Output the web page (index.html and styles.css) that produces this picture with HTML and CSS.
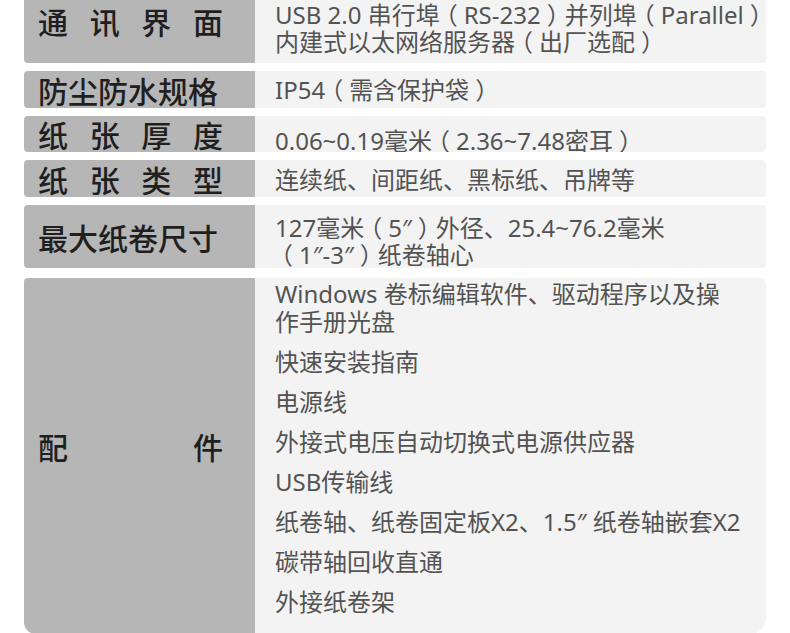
FILE: index.html
```html
<!DOCTYPE html>
<html lang="zh-CN">
<head>
<meta charset="utf-8">
<title>规格</title>
<link rel="stylesheet" href="styles.css">
</head>
<body>
<div class="spec">
  <div class="row r-comm">
    <div class="label label-top spread"><span>通</span><span>讯</span><span>界</span><span>面</span></div>
    <div class="value">
      <div class="line">USB 2.0 串行埠<span class="pp">（</span>RS-232<span class="pp">）</span>并列埠<span class="pp">（</span>Parallel<span class="pp">）</span></div>
      <div class="line">内建式以太网络服务器<span class="pp">（</span>出厂选配<span class="pp">）</span></div>
    </div>
  </div>
  <div class="row r-ip">
    <div class="label">防尘防水规格</div>
    <div class="value"><div class="line">IP54<span class="pp">（</span>需含保护袋<span class="pp">）</span></div></div>
  </div>
  <div class="row r-thick">
    <div class="label spread"><span>纸</span><span>张</span><span>厚</span><span>度</span></div>
    <div class="value"><div class="line">0.06~0.19毫米<span class="pp">（</span>2.36~7.48密耳<span class="pp">）</span></div></div>
  </div>
  <div class="row r-type">
    <div class="label spread"><span>纸</span><span>张</span><span>类</span><span>型</span></div>
    <div class="value"><div class="line">连续纸、间距纸、黑标纸、吊牌等</div></div>
  </div>
  <div class="row r-roll">
    <div class="label">最大纸卷尺寸</div>
    <div class="value">
      <div class="line">127毫米<span class="pp">（</span>5″<span class="pp">）</span>外径、25.4~76.2毫米</div>
      <div class="line"><span class="pp">（</span>1″-3″<span class="pp">）</span>纸卷轴心</div>
    </div>
  </div>
  <div class="row r-acc">
    <div class="label spread"><span>配</span><span>件</span></div>
    <div class="value list">
      <div class="item first">Windows 卷标编辑软件、驱动程序以及操<br>作手册光盘</div>
      <div class="item">快速安装指南</div>
      <div class="item">电源线</div>
      <div class="item">外接式电压自动切换式电源供应器</div>
      <div class="item">USB传输线</div>
      <div class="item">纸卷轴、纸卷固定板X2、1.5″ 纸卷轴嵌套X2</div>
      <div class="item">碳带轴回收直通</div>
      <div class="item">外接纸卷架</div>
    </div>
  </div>
</div>
</body>
</html>
```

FILE: styles.css
```css
html, body {
  margin: 0;
  padding: 0;
  background: #ffffff;
}

body {
  overflow: hidden;
  height: 633px;
}

.spec {
  width: 742px;
  margin-left: 24px;
  margin-top: -8px;
  display: flex;
  flex-direction: column;
  gap: 8px;
}

.row {
  display: flex;
  align-items: stretch;
}

.label {
  width: 231px;
  box-sizing: border-box;
  flex-shrink: 0;
  background: #b6b6b6;
  border-radius: 4px 0 0 4px;
  padding-left: 14px;
  padding-right: 32px;
  display: flex;
  align-items: center;
  font-family: "Noto Sans CJK SC", sans-serif;
  font-weight: 500;
  font-size: 30px;
  line-height: 36px;
  color: #1f1f1f;
  white-space: nowrap;
}

.spread {
  justify-content: space-between;
}

.label-top {
  align-items: flex-start;
  padding-top: 11px;
}

.value {
  flex: 1;
  background: #f3f3f3;
  border-radius: 0 4px 4px 0;
  padding-left: 20px;
  display: flex;
  flex-direction: column;
  justify-content: flex-start;
  font-family: "Noto Sans", "Noto Sans CJK SC", sans-serif;
  font-size: 24px;
  line-height: 27px;
  color: #535353;
  white-space: nowrap;
  overflow: hidden;
}

.pp {
  display: inline-block;
  font-feature-settings: "halt" 1;
  padding: 0 6px;
}

.r-comm { height: 71px; }
.r-comm .value { padding-top: 9px; }

.r-ip { height: 37px; }
.r-ip .value { padding-top: 5px; }

.r-thick { height: 36px; }
.r-thick .value { padding-top: 11px; }

.r-type { height: 37px; }
.r-type .value { padding-top: 6px; }

.r-roll { height: 63px; }
.r-roll .value { padding-top: 9px; }

.r-acc {
  height: 356px;
  margin-top: 2px;
}
.r-acc .label {
  border-radius: 4px 0 0 12px;
  padding-bottom: 20px;
}
.r-acc .value {
  border-radius: 0 6px 16px 0;
}

.list {
  padding-top: 2px;
  gap: 11px;
}

.item {
  line-height: 29px;
}

.item.first {
  line-height: 28px;
}
```
